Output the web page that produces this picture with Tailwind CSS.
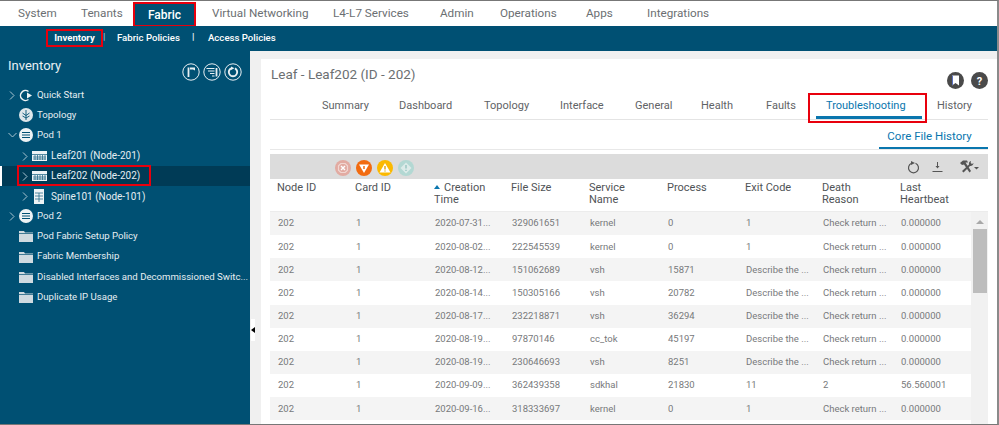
<!DOCTYPE html>
<html><head><meta charset="utf-8"><script src="https://cdn.jsdelivr.net/npm/@tailwindcss/browser@4"></script></head>
<body class="m-0 bg-white">
<div class="w-[999px] h-[425px] overflow-hidden flex flex-col font-['Roboto',sans-serif] border-t border-b border-r-2 border-t-[#777] border-b-[#777] border-r-[#8a8a8a] relative">
 <nav class="h-[25px] shrink-0 flex items-center bg-white text-[11.7px] text-[#6b6f72] relative">
  <span class="absolute left-[18px] top-[4px]">System</span>
  <span class="absolute left-[81px] top-[4px]">Tenants</span>
  <span class="absolute left-[133px] top-[1px] w-[63px] h-[25px] bg-[#005073] border-2 border-[#e8000d] text-white font-medium text-[12px] flex items-center justify-center">Fabric</span>
  <span class="absolute left-[212px] top-[4px]">Virtual Networking</span>
  <span class="absolute left-[333px] top-[4px]">L4-L7 Services</span>
  <span class="absolute left-[440px] top-[4px]">Admin</span>
  <span class="absolute left-[500px] top-[4px]">Operations</span>
  <span class="absolute left-[586px] top-[4px]">Apps</span>
  <span class="absolute left-[647px] top-[4px]">Integrations</span>
 </nav>
 <div class="h-[25px] shrink-0 bg-[#005073] relative text-white text-[9.6px] font-medium">
  <span class="absolute left-[46px] top-[3px] w-[57px] h-[18px] border-2 border-[#e8000d] flex items-center justify-center font-bold">Inventory</span>
  <span class="absolute left-[103px] top-[4px] text-[#9fc0cf]">|</span>
  <span class="absolute left-[117px] top-[5px]">Fabric Policies</span>
  <span class="absolute left-[192px] top-[4px]">|</span>
  <span class="absolute left-[208px] top-[5px]">Access Policies</span>
 </div>
 <div class="flex-1 flex min-h-0">
  <aside class="w-[250px] shrink-0 bg-[#005073] text-[#e6eef2] text-[9.6px] relative">
   <div class="absolute left-[8px] top-[5px] text-[13px] text-[#e9f0f3]">Inventory</div>
   <div class="absolute left-[182px] top-[12px] flex gap-[3px]">
    <svg class="w-[18px] h-[18px]" viewBox="0 0 18 18" fill="none" stroke="#e9f0f3"><circle cx="9" cy="9" r="8.2"/><path d="M6.500 14V4.500" stroke-width="1.800"/><path d="M8 4.500h5v3l-2-1H8z" fill="#e9f0f3" stroke="none"/></svg>
    <svg class="w-[18px] h-[18px]" viewBox="0 0 18 18" fill="none" stroke="#e9f0f3"><circle cx="9" cy="9" r="8.2"/><path d="M3.500 5.500h8M5 8h6.500M7 10.500h4.500M9 13h2.500" stroke-width="1.200"/><path d="M13.500 5v8.500" stroke-width="1.800"/></svg>
    <svg class="w-[18px] h-[18px]" viewBox="0 0 18 18" fill="none" stroke="#e9f0f3"><circle cx="9" cy="9" r="8.2"/><path d="M7 5.400a4.200 4.200 0 1 0 4 0" stroke-width="1.900"/><path d="M7 3.500l3.500 1.800L7 7z" fill="#e9f0f3" stroke="none"/></svg>
   </div>
   <ul class="absolute left-0 right-0 top-[34px] flex flex-col">
    <li class="h-[20.2px] relative flex items-center pl-[37px]">
     <svg class="absolute left-[9px] top-[6px] w-[6px] h-[9px]" viewBox="0 0 6 9" fill="none" stroke="#a9c4d1"><path d="M1 .5l4 4-4 4"/></svg>
     <svg class="absolute left-[19px] top-[4px] w-[14px] h-[13px]" viewBox="0 0 14 13" fill="none" stroke="#eef3f5" stroke-width="1.500"><path d="M9.500 2.500A5 5 0 1 0 9.500 10.500"/><path d="M8 3.500l5 3-5 3z" fill="#eef3f5" stroke="none"/></svg>
     Quick Start</li>
    <li class="h-[20.2px] relative flex items-center pl-[37px]">
     <svg class="absolute left-[19px] top-[3px] w-[14px] h-[14px]" viewBox="0 0 14 14" fill="none"><circle cx="7" cy="7" r="7" fill="#dfe7eb"/><path d="M7 2v10M7 7.500L3.500 5M7 7.500L10.500 5M7 10L3.500 8M7 10l3.500-2" stroke="#005073" stroke-width=".9"/></svg>
     Topology</li>
    <li class="h-[20.2px] relative flex items-center pl-[37px]">
     <svg class="absolute left-[8px] top-[7px] w-[9px] h-[6px]" viewBox="0 0 9 6" fill="none" stroke="#a9c4d1"><path d="M.5 1l4 4 4-4"/></svg>
     <svg class="absolute left-[19px] top-[3px] w-[14px] h-[14px]" viewBox="0 0 14 14"><circle cx="7" cy="7" r="7" fill="#eef3f5"/><path d="M3 4.500h8M3 7h8M3 9.500h8" stroke="#005073" stroke-width="1"/></svg>
     Pod 1</li>
    <li class="h-[20.2px] relative flex items-center pl-[51px] text-[10px]">
     <svg class="absolute left-[22px] top-[6px] w-[6px] h-[9px]" viewBox="0 0 6 9" fill="none" stroke="#a9c4d1"><path d="M1 .5l4 4-4 4"/></svg>
     <svg class="absolute left-[32px] top-[5px] w-[15px] h-[10px]" viewBox="0 0 15 10"><rect width="15" height="10" fill="#eef3f5"/><path d="M0 3.500h15M1 6h13M1 8h13M3 4v5M5.500 4v5M8 4v5M10.500 4v5M13 4v5" stroke="#2a6d8c" stroke-width=".8"/></svg>
     Leaf201 (Node-201)</li>
    <li class="h-[20.2px] relative flex items-center pl-[49px] text-[10px] bg-[#003b56] border-l-2 border-white w-[250px]">
     <svg class="absolute left-[20px] top-[6px] w-[6px] h-[9px]" viewBox="0 0 6 9" fill="none" stroke="#a9c4d1"><path d="M1 .5l4 4-4 4"/></svg>
     <svg class="absolute left-[30px] top-[5px] w-[15px] h-[10px]" viewBox="0 0 15 10"><rect width="15" height="10" fill="#eef3f5"/><path d="M0 3.500h15M1 6h13M1 8h13M3 4v5M5.500 4v5M8 4v5M10.500 4v5M13 4v5" stroke="#2a6d8c" stroke-width=".8"/></svg>
     Leaf202 (Node-202)
     <span class="absolute left-[15px] top-[-1px] w-[134px] h-[21px] border-2 border-[#e8000d]"></span></li>
    <li class="h-[20.2px] relative flex items-center pl-[51px] text-[10px]">
     <svg class="absolute left-[22px] top-[6px] w-[6px] h-[9px]" viewBox="0 0 6 9" fill="none" stroke="#a9c4d1"><path d="M1 .5l4 4-4 4"/></svg>
     <svg class="absolute left-[34px] top-[3px] w-[10px] h-[15px]" viewBox="0 0 10 15"><rect width="10" height="15" fill="#eef3f5"/><path d="M1 4h8M1 7h8M1 10h8M5 4v9" stroke="#2a6d8c" stroke-width=".8"/></svg>
     Spine101 (Node-101)</li>
    <li class="h-[20.2px] relative flex items-center pl-[37px]">
     <svg class="absolute left-[9px] top-[6px] w-[6px] h-[9px]" viewBox="0 0 6 9" fill="none" stroke="#a9c4d1"><path d="M1 .5l4 4-4 4"/></svg>
     <svg class="absolute left-[19px] top-[3px] w-[14px] h-[14px]" viewBox="0 0 14 14"><circle cx="7" cy="7" r="7" fill="#eef3f5"/><path d="M3 4.500h8M3 7h8M3 9.500h8" stroke="#005073" stroke-width="1"/></svg>
     Pod 2</li>
    <li class="h-[20.2px] relative flex items-center pl-[37px]">
     <svg class="absolute left-[19px] top-[4px] w-[14px] h-[12px]" viewBox="0 0 14 12"><path d="M0 1h5l1 1.500h8V12H0z" fill="#cfdae0"/><path d="M0 3.500h14" stroke="#005073" stroke-width=".7"/></svg>
     Pod Fabric Setup Policy</li>
    <li class="h-[20.2px] relative flex items-center pl-[37px]">
     <svg class="absolute left-[19px] top-[4px] w-[14px] h-[12px]" viewBox="0 0 14 12"><path d="M0 1h5l1 1.500h8V12H0z" fill="#cfdae0"/><path d="M0 3.500h14" stroke="#005073" stroke-width=".7"/></svg>
     Fabric Membership</li>
    <li class="h-[20.2px] relative flex items-center pl-[37px]">
     <svg class="absolute left-[19px] top-[4px] w-[14px] h-[12px]" viewBox="0 0 14 12"><path d="M0 1h5l1 1.500h8V12H0z" fill="#cfdae0"/><path d="M0 3.500h14" stroke="#005073" stroke-width=".7"/></svg>
     <span class="whitespace-nowrap">Disabled Interfaces and Decommissioned Switc...</span></li>
    <li class="h-[20.2px] relative flex items-center pl-[37px]">
     <svg class="absolute left-[19px] top-[4px] w-[14px] h-[12px]" viewBox="0 0 14 12"><path d="M0 1h5l1 1.500h8V12H0z" fill="#cfdae0"/><path d="M0 3.500h14" stroke="#005073" stroke-width=".7"/></svg>
     Duplicate IP Usage</li>
   </ul>
  </aside>
  <div class="w-[11px] shrink-0 bg-[#f0f0f0] relative">
   <div class="absolute left-[1px] top-[268px] w-[4px] h-[22px] bg-white"></div>
   <div class="absolute left-[1px] top-[276px] w-0 h-0 border-y-[3px] border-y-transparent border-r-[4px] border-r-black"></div>
  </div>
  <main class="flex-1 min-w-0 flex flex-col bg-[#f0f0f0] pt-[8px]">
   <div class="flex-1 bg-white pl-[9px] pr-[9px] flex flex-col min-h-0 relative">
    <h1 class="text-[13.5px] font-normal text-[#6b6f72] pt-[6px] pl-[1px] h-[30px] leading-[18px] m-0">Leaf - Leaf202 (ID - 202)</h1>
    <div class="absolute left-[686px] top-[13px] flex gap-[7px]">
     <svg class="w-[17px] h-[17px]" viewBox="0 0 17 17"><circle cx="8.500" cy="8.500" r="8.500" fill="#4a4a4a"/><path d="M5 3.500h7v10l-3.500-2.500L5 13.500z" fill="#fff"/><path d="M5.500 3.500v9.500" stroke="#5b6fc0"/></svg>
     <svg class="w-[17px] h-[17px]" viewBox="0 0 17 17"><circle cx="8.500" cy="8.500" r="8.500" fill="#4a4a4a"/><text x="8.500" y="12.500" text-anchor="middle" font-size="11" font-weight="700" fill="#fff" font-family="Roboto">?</text></svg>
    </div>
    <div class="h-[31px] border-b border-[#e4e4e4] relative text-[11px] text-[#5f6366] shrink-0">
     <span class="absolute left-[52px] top-[9px]">Summary</span>
     <span class="absolute left-[129px] top-[9px]">Dashboard</span>
     <span class="absolute left-[214px] top-[9px]">Topology</span>
     <span class="absolute left-[290px] top-[9px]">Interface</span>
     <span class="absolute left-[365px] top-[9px]">General</span>
     <span class="absolute left-[431px] top-[9px]">Health</span>
     <span class="absolute left-[496px] top-[9px]">Faults</span>
     <span class="absolute left-[538px] top-[4px] w-[119px] h-[30px] border-2 border-[#e8000d]"></span>
     <span class="absolute left-[546px] top-[27px] w-[106px] h-[3px] bg-[#0a76ae]"></span>
     <span class="absolute left-[556px] top-[9px] text-[#0a76ae]">Troubleshooting</span>
     <span class="absolute left-[667px] top-[9px]">History</span>
    </div>
    <div class="h-[30px] shrink-0 relative text-[11.5px] border-b border-[#e8e8e8]">
     <span class="absolute left-[609px] top-[0px] w-[109px] h-[29px] border-b-2 border-[#0a76ae] text-[#0a76ae] flex items-center justify-center pt-[7px] pr-[8px]">Core File History</span>
    </div>
    <div class="mt-[4px] h-[25px] shrink-0 bg-[#dcdcdc] relative">
     <svg class="absolute left-[65px] top-[6px] w-[16px] h-[16px]" viewBox="0 0 16 16"><circle cx="8" cy="8" r="8" fill="#e2aba2"/><path d="M5.800 3.500h4.400l2.300 2.300v4.400l-2.300 2.300H5.800l-2.300-2.300V5.800z" fill="none" stroke="#f1d6d1" stroke-width="1.200"/><path d="M6 6l4 4M10 6l-4 4" stroke="#fff" stroke-width="1.400"/></svg>
     <svg class="absolute left-[86px] top-[6px] w-[16px] h-[16px]" viewBox="0 0 16 16"><circle cx="8" cy="8" r="8" fill="#f26b10"/><path d="M3 4.500h10L8 13z" fill="#fff"/><path d="M8 6v3" stroke="#f26b10" stroke-width="1.500"/></svg>
     <svg class="absolute left-[107px] top-[6px] w-[16px] h-[16px]" viewBox="0 0 16 16"><circle cx="8" cy="8" r="8" fill="#fbb900"/><path d="M8 3l5.500 9.500h-11z" fill="#fff"/><path d="M8 6v3.500M8 10.500v1" stroke="#d79c00" stroke-width="1.300"/></svg>
     <svg class="absolute left-[128px] top-[6px] w-[16px] h-[16px]" viewBox="0 0 16 16"><circle cx="8" cy="8" r="8" fill="#b3d8d3"/><path d="M8 2.500l5.500 5.500-5.500 5.500L2.500 8z" fill="#dcebe9"/><path d="M8 5v3.500M8 9.800v1.200" stroke="#9ac8c2" stroke-width="1.500"/></svg>
     <svg class="absolute left-[637px] top-[6px] w-[13px] h-[14px]" viewBox="0 0 13 14" fill="none"><path d="M4.500 3.200a5 5 0 1 0 4 0" stroke="#555" stroke-width="1.200"/><path d="M4 1l4 2-4 2z" fill="#555"/></svg>
     <svg class="absolute left-[662px] top-[7px] w-[11px] h-[12px]" viewBox="0 0 11 12" fill="none"><path d="M5.500 1v5" stroke="#555"/><path d="M3.500 5h4l-2 2.500z" fill="#555"/><path d="M.5 10.500h10" stroke="#555"/></svg>
     <svg class="absolute left-[689px] top-[6px] w-[20px] h-[13px]" viewBox="0 0 20 13" fill="#555"><path d="M1 3l3-2.500h4l1 2H6.500L12 11l-1.500 1.500L5 4.500 3 5z"/><path d="M12 1a3 3 0 0 0-2 3.500L3 11l1.500 1.500L11 6a3 3 0 0 0 3.500-3L13 4l-1.300-1z"/><path d="M15 7h5l-2.500 2.500z"/></svg>
    </div>
    <div class="h-[33px] shrink-0 grid grid-cols-[78px_79px_77px_78px_78px_78px_77px_78px_auto] text-[11px] leading-[12px] text-[#4f5356] border-b border-[#ececec] pt-[3px]">
     <div class="pl-[7px]">Node ID</div><div class="pl-[7px]">Card ID</div><div class="pl-[7px]"><span class="inline-block w-0 h-0 border-x-[3px] border-x-transparent border-b-[4px] border-b-[#0a76ae] mr-[4px] mb-[2px]"></span>Creation Time</div><div class="pl-[7px]">File Size</div><div class="pl-[7px] w-[60px]">Service Name</div><div class="pl-[7px]">Process</div><div class="pl-[7px]">Exit Code</div><div class="pl-[7px] w-[60px]">Death Reason</div><div class="pl-[7px] w-[60px]">Last Heartbeat</div>
    </div>
    <div class="flex-1 min-h-0 overflow-hidden text-[9.5px] text-[#77797b] relative">
     <table class="w-[701px] border-collapse table-fixed">
      <colgroup><col class="w-[78px]"/><col class="w-[79px]"/><col class="w-[77px]"/><col class="w-[78px]"/><col class="w-[78px]"/><col class="w-[78px]"/><col class="w-[77px]"/><col class="w-[78px]"/><col class="w-[78px]"/></colgroup>
      <tbody>
       <tr class="h-[23.15px] bg-[#f4f4f4]"><td class="pl-[8px]">202</td><td class="pl-[8px]">1</td><td class="pl-[8px]">2020-07-31...</td><td class="pl-[8px]">329061651</td><td class="pl-[8px]">kernel</td><td class="pl-[8px]">0</td><td class="pl-[8px]">1</td><td class="pl-[8px]">Check return ...</td><td class="pl-[8px]">0.000000</td></tr>
       <tr class="h-[23.15px]"><td class="pl-[8px]">202</td><td class="pl-[8px]">1</td><td class="pl-[8px]">2020-08-02...</td><td class="pl-[8px]">222545539</td><td class="pl-[8px]">kernel</td><td class="pl-[8px]">0</td><td class="pl-[8px]">1</td><td class="pl-[8px]">Check return ...</td><td class="pl-[8px]">0.000000</td></tr>
       <tr class="h-[23.15px] bg-[#f4f4f4]"><td class="pl-[8px]">202</td><td class="pl-[8px]">1</td><td class="pl-[8px]">2020-08-12...</td><td class="pl-[8px]">151062689</td><td class="pl-[8px]">vsh</td><td class="pl-[8px]">15871</td><td class="pl-[8px]">Describe the ...</td><td class="pl-[8px]">Check return ...</td><td class="pl-[8px]">0.000000</td></tr>
       <tr class="h-[23.15px]"><td class="pl-[8px]">202</td><td class="pl-[8px]">1</td><td class="pl-[8px]">2020-08-14...</td><td class="pl-[8px]">150305166</td><td class="pl-[8px]">vsh</td><td class="pl-[8px]">20782</td><td class="pl-[8px]">Describe the ...</td><td class="pl-[8px]">Check return ...</td><td class="pl-[8px]">0.000000</td></tr>
       <tr class="h-[23.15px] bg-[#f4f4f4]"><td class="pl-[8px]">202</td><td class="pl-[8px]">1</td><td class="pl-[8px]">2020-08-17...</td><td class="pl-[8px]">232218871</td><td class="pl-[8px]">vsh</td><td class="pl-[8px]">36294</td><td class="pl-[8px]">Describe the ...</td><td class="pl-[8px]">Check return ...</td><td class="pl-[8px]">0.000000</td></tr>
       <tr class="h-[23.15px]"><td class="pl-[8px]">202</td><td class="pl-[8px]">1</td><td class="pl-[8px]">2020-08-19...</td><td class="pl-[8px]">97870146</td><td class="pl-[8px]">cc_tok</td><td class="pl-[8px]">45197</td><td class="pl-[8px]">Describe the ...</td><td class="pl-[8px]">Check return ...</td><td class="pl-[8px]">0.000000</td></tr>
       <tr class="h-[23.15px] bg-[#f4f4f4]"><td class="pl-[8px]">202</td><td class="pl-[8px]">1</td><td class="pl-[8px]">2020-08-19...</td><td class="pl-[8px]">230646693</td><td class="pl-[8px]">vsh</td><td class="pl-[8px]">8251</td><td class="pl-[8px]">Describe the ...</td><td class="pl-[8px]">Check return ...</td><td class="pl-[8px]">0.000000</td></tr>
       <tr class="h-[23.15px]"><td class="pl-[8px]">202</td><td class="pl-[8px]">1</td><td class="pl-[8px]">2020-09-09...</td><td class="pl-[8px]">362439358</td><td class="pl-[8px]">sdkhal</td><td class="pl-[8px]">21830</td><td class="pl-[8px]">11</td><td class="pl-[8px]">2</td><td class="pl-[8px]">56.560001</td></tr>
       <tr class="h-[23.15px] bg-[#f4f4f4]"><td class="pl-[8px]">202</td><td class="pl-[8px]">1</td><td class="pl-[8px]">2020-09-16...</td><td class="pl-[8px]">318333697</td><td class="pl-[8px]">kernel</td><td class="pl-[8px]">0</td><td class="pl-[8px]">1</td><td class="pl-[8px]">Check return ...</td><td class="pl-[8px]">0.000000</td></tr>
      </tbody>
     </table>
     <div class="absolute right-0 top-0 bottom-0 w-[17px] bg-[#f1f1f1]">
      <div class="mx-auto mt-[8px] w-0 h-0 border-x-[4px] border-x-transparent border-b-[4px] border-b-[#a8a8a8]"></div>
      <div class="mx-auto mt-[5px] w-[14px] h-[64px] bg-[#bdbdbd]"></div>
     </div>
    </div>
   </div>
  </main>
 </div>
</div>
</body></html>
